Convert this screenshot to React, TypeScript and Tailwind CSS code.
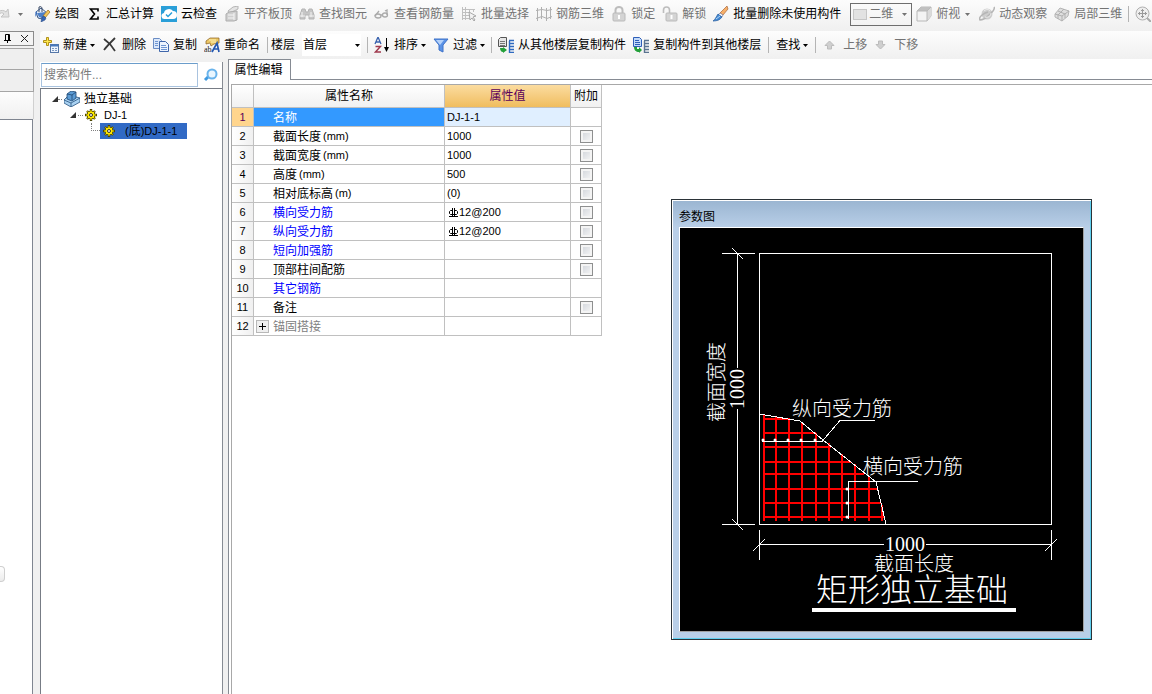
import { useState } from 'react';
import type { ReactNode } from 'react';

function Svg({ children }: { children: ReactNode }) {
  return (
    <svg viewBox="0 0 16 16" className="h-4 w-4 shrink-0" fill="none" aria-hidden="true">
      {children}
    </svg>
  );
}

const icons = {
  redo: (
    <Svg>
      <path d="M3 13c-3-7 5-11 9-7l2-3 1 8H7l3-3C7 5 4 8 5 13z" fill="#e2e2e2" stroke="#c4c4c4" />
    </Svg>
  ),
  draw: (
    <Svg>
      <path d="M1 6l5-4 6 5-5 6-4-1z" fill="#eaf1fb" stroke="#3d5a85" />
      <path d="M2 7l9-1-4 6-3-1z" fill="#4d80c8" />
      <path d="M4 6V1c2-1 3 0 3 2v3" stroke="#3a4a66" />
      <path d="M1 5c-1 3-1 5 0 6l1-5z" fill="#3f74c4" />
      <path d="M13 4l2 2-5 6-2-2z" fill="#f3c65a" stroke="#9a6a1a" strokeWidth=".7" />
      <path d="M7 11l2-1 2 2-1 2-4 2z" fill="#3566b4" stroke="#25457c" strokeWidth=".5" />
    </Svg>
  ),
  sum: (
    <Svg>
      <path d="M12 5.500V3H4.500l4 5-4 5H12v-2.500" stroke="#000" strokeWidth="1.6" />
    </Svg>
  ),
  cloud: (
    <Svg>
      <path d="M0 0h16v16H0z" fill="#2a9fd8" />
      <path d="M4 13a3 3 0 01-1-6 5 4.500 0 019-2 4 4 0 010 8z" fill="#fff" />
      <path d="M5 8.500l2 2 4-4" stroke="#2a9fd8" strokeWidth="1.5" />
    </Svg>
  ),
  slab: (
    <Svg>
      <path d="M4 5l5-4 5-1v3l-4 2-5 2z" fill="#e4e4e4" stroke="#b5b5b5" />
      <path d="M2 8l3-2 8-1v9l-3 1H2z" fill="#cfcfcf" stroke="#adadad" />
      <path d="M4 9h6M4 12h6M10 7v7" stroke="#f5f5f5" />
    </Svg>
  ),
  binoculars: (
    <Svg>
      <path d="M3 3h3l1 3h2l1-3h3l2 6v4h-5V9H6v4H1V9z" fill="#c6c6c6" stroke="#b4b4b4" />
      <path d="M3 6v5M12 6v5M1 10h5M10 10h5" stroke="#f3f3f3" />
    </Svg>
  ),
  glasses: (
    <Svg>
      <ellipse cx="4" cy="10" rx="3" ry="2" stroke="#aaa" strokeWidth="1.3" />
      <ellipse cx="11" cy="9" rx="2.500" ry="2" stroke="#aaa" strokeWidth="1.3" />
      <path d="M7 9h2M1 10l4-5M13 9V4l-2 1" stroke="#aaa" strokeWidth="1.3" />
    </Svg>
  ),
  batch: (
    <Svg>
      <path d="M1.500 1v13M4.500 1v13M1 3.500h13M1 6.500h8M1 9.500h8M1 12.500h8M8.500 3v4M12.500 3v3" stroke="#c0c0c0" />
      <path d="M8 6l7 4-3 1 2 3-1 1-2-3-2 2z" fill="#f2f2f2" stroke="#a8a8a8" />
    </Svg>
  ),
  rebar3d: (
    <Svg>
      <path d="M1.500 2v13M5.500 1v12M10.500 2v13M14.500 1v12M0 4.500l6-1 5 1 5-1M0 12.500l6-2 5 2 5-2" stroke="#b0b0b0" />
    </Svg>
  ),
  lock: (
    <Svg>
      <path d="M4.500 7V4a3.500 3 0 017 0v3" stroke="#bdbdbd" strokeWidth="2" />
      <rect x="2" y="7" width="12" height="8" rx="1" fill="#d4d4d4" stroke="#bababa" />
      <path d="M8 9v4" stroke="#fff" strokeWidth="2" />
    </Svg>
  ),
  unlock: (
    <Svg>
      <path d="M1.500 7V4a3 3 0 016 0v3" stroke="#bdbdbd" strokeWidth="1.6" />
      <rect x="4" y="7" width="11" height="8" rx="1" fill="#d4d4d4" stroke="#bababa" />
      <path d="M9.500 9v4" stroke="#fff" strokeWidth="2" />
    </Svg>
  ),
  brush: (
    <Svg>
      <path d="M14 0l1 3-5 6-3-2z" fill="#f7b06a" stroke="#a8663a" strokeWidth=".7" />
      <path d="M7 7l3 2-1 2-4-2z" fill="#fff" stroke="#7a7a9a" strokeWidth=".7" />
      <path d="M5 8l4 3c-2 3-5 4-9 4 2-1 3-4 5-7z" fill="#4289d4" stroke="#245a9c" strokeWidth=".7" />
      <path d="M3 13l4-3" stroke="#b7d6f5" />
    </Svg>
  ),
  plane: (
    <Svg>
      <rect x="1.500" y="3.500" width="13" height="10" fill="#e2e2e2" stroke="#c6c6c6" />
    </Svg>
  ),
  cube: (
    <Svg>
      <path d="M1 5l4-4h10v9l-4 5H1z" fill="#f3f3f3" stroke="#b8b8b8" />
      <path d="M1 5l4-4h10l-4 4z" fill="#c0c0c0" />
      <path d="M11 5l4-4v9l-4 5z" fill="#dadada" />
      <path d="M1 5h10v10M11 5l4-4" stroke="#b8b8b8" />
    </Svg>
  ),
  orbit: (
    <Svg>
      <circle cx="8" cy="8" r="5.500" fill="#cdcdcd" />
      <path d="M15 1c2 3-9 13-14 13-2-3 4-7 8-8" stroke="#b5b5b5" strokeWidth="1.5" />
      <path d="M5 5c2-2 5-2 6 0M6 11c3 1 6-1 6-4" stroke="#efefef" />
    </Svg>
  ),
  local3d: (
    <Svg>
      <path d="M1 8l5-6 9 3-1 5-6 5-7-4z" fill="#dedede" stroke="#b5b5b5" />
      <path d="M1 8l7 2 7-5M8 10v5M4 5l7 3v4M10 3L4 9v4" stroke="#b0b0b0" />
    </Svg>
  ),
  zoom: (
    <Svg>
      <circle cx="7.500" cy="7.500" r="6.500" fill="#eee" stroke="#b0b0b0" />
      <path d="M7.500 3v9M3 7.500h9M6 4.500h3M6 10.500h3M4.500 6v3M10.500 6v3" stroke="#999" />
      <path d="M12 12l4 4" stroke="#aaa" strokeWidth="2" />
    </Svg>
  ),
  create: (
    <Svg>
      <rect x="7.500" y="7.500" width="8" height="8" fill="#eef5fe" stroke="#5577a8" />
      <path d="M8 8.500h7" stroke="#4779be" strokeWidth="2" />
      <path d="M9 11.500h2M12 11.500h2M9 13.500h2M12 13.500h2" stroke="#7c98c0" />
      <path d="M3.500.500h2v3h3v2h-3v3h-2v-3h-3v-2h3z" fill="#ffe94d" stroke="#a8860c" strokeWidth=".9" />
    </Svg>
  ),
  remove: (
    <Svg>
      <path d="M2 2l6 5 5 7M13 1C9 5 5 9 2 13" stroke="#3a3a3a" strokeWidth="1.8" />
    </Svg>
  ),
  copy: (
    <Svg>
      <path d="M.5 1.500h6l2 2v8h-8z" fill="#dbe8fa" stroke="#6a8cc4" />
      <path d="M6.500 4.500h6l3 3v7h-9z" fill="#edf4fe" stroke="#3f66aa" />
      <path d="M2 4.500h3M2 6.500h3M2 8.500h3M8 8.500h5M8 10.500h6M8 12.500h6" stroke="#6f96d2" />
    </Svg>
  ),
  rename: (
    <Svg>
      <path d="M2 4l4-3h9v5l-5 1-3 2-1-3-4 1z" fill="#ecc766" stroke="#8a5f1c" strokeWidth=".7" />
      <path d="M5 3h7M7 5h5" stroke="#fff2b5" />
      <text x="0" y="15" fontSize="8" fill="#222" fontFamily="Liberation Serif, serif">ab</text>
      <path d="M8 15l5-9 2 9M10 12h5" stroke="#2557b0" strokeWidth="1.7" />
    </Svg>
  ),
  sort: (
    <Svg>
      <path d="M1 7l3-7 3 7M2 5h4" stroke="#3a63ae" strokeWidth="1.3" />
      <path d="M1.500 9.500h5l-5 5.500h5.500" stroke="#a03a4e" strokeWidth="1.4" />
      <path d="M12.500 1v11" stroke="#000" />
      <path d="M10 10h5l-2.500 5z" fill="#000" />
    </Svg>
  ),
  filter: (
    <Svg>
      <path d="M1 2h14l-5 6v7l-4-2V8z" fill="#5b93e6" stroke="#3f72c8" />
      <path d="M3 3h8L7 8z" fill="#b5d2fa" />
    </Svg>
  ),
  copyFrom: (
    <Svg>
      <path d="M.5 2.500l2-2h6v9h-8z" fill="#e6e6e6" stroke="#555" />
      <path d="M2 4.500h5M2 6.500h5M2 8.500h5" stroke="#777" />
      <path d="M2 11h3v-1l4 3-4 3v-1c-2 0-3-2-3-4z" fill="#23a03a" />
      <path d="M11.500 4v12M11 3.500h5M11 6.500h5M11 9.500h5M11 12.500h5M11 15.500h5" stroke="#2e6ac0" strokeWidth="1.4" />
    </Svg>
  ),
  copyTo: (
    <Svg>
      <path d="M.5.500h6l2 2v7h-8z" fill="#c4daf9" stroke="#2e5fb8" />
      <path d="M2 3.500h4M2 5.500h5M2 7.500h5" stroke="#2e5fb8" />
      <path d="M1 10h3v2h2v-2l3 3-3 3v-1c-3 0-5-2-5-5z" fill="#23a03a" />
      <path d="M11.500 4v12M11 3.500h5M11 6.500h5M11 9.500h5M11 12.500h5M11 15.500h5" stroke="#5a7390" strokeWidth="1.4" />
    </Svg>
  ),
  up: (
    <Svg>
      <path d="M6.500 4l4.500 4.500H8.500V12h-4V8.500H2z" fill="#cfcfcf" stroke="#bcbcbc" />
    </Svg>
  ),
  down: (
    <Svg>
      <path d="M6.500 12L2 7.500h2.500V4h4v3.500H11z" fill="#cfcfcf" stroke="#bcbcbc" />
    </Svg>
  ),
  search: (
    <Svg>
      <path d="M6 9l-4 4" stroke="#3f9ae0" strokeWidth="3" />
      <circle cx="9" cy="7" r="4.500" fill="#e9f6ff" stroke="#6ab4ec" strokeWidth="2" />
    </Svg>
  ),
  foundation: (
    <Svg>
      <path d="M0 9l5-5 11 3v4l-9 5-7-4z" fill="#a9d2f2" stroke="#26507c" strokeWidth=".8" />
      <path d="M0 9l7 3 9-5M7 12v4" stroke="#26507c" strokeWidth=".8" />
      <path d="M3 3l4-3 5 1v6l-4 3-5-2z" fill="#5b9bd4" stroke="#1f4872" strokeWidth=".8" />
      <path d="M3 3l5 1 4-3M8 4v5" stroke="#1f4872" strokeWidth=".8" />
    </Svg>
  ),
  gear: (
    <svg viewBox="0 0 12 12" className="h-3 w-3 shrink-0" fill="none" aria-hidden="true">
      <path d="M6 0v12M0 6h12M2 2l8 8M10 2l-8 8" stroke="#4d4500" strokeWidth="2.4" />
      <circle cx="6" cy="6" r="4" fill="#ffe900" stroke="#4d4500" strokeWidth=".8" />
      <path d="M6 1v10M1 6h10M2.500 2.500l7 7M9.500 2.500l-7 7" stroke="#ffe900" />
      <circle cx="6" cy="6" r="1.500" fill="#fff" stroke="#222" strokeWidth=".9" />
    </svg>
  ),
};

type IconName = keyof typeof icons;

function Caret({ className = '' }: { className?: string }) {
  return (
    <svg viewBox="0 0 5 3" className={'h-[3px] w-[5px] shrink-0 pointer-events-none ' + className} aria-hidden="true">
      <path d="M0 0h5L2.500 3z" fill="currentColor" />
    </svg>
  );
}

function Separator({ tight = false }: { tight?: boolean }) {
  return <div className={tight ? '-mx-px h-4 w-px shrink-0 bg-[#b4b4b4]' : 'h-4 w-px shrink-0 bg-[#b4b4b4]'} />;
}

interface ToolProps {
  icon?: IconName;
  label?: string;
  title?: string;
  menu?: boolean;
  disabled?: boolean;
}

function Tool({ icon, label, title, menu, disabled }: ToolProps) {
  return (
    <button
      type="button"
      disabled={disabled}
      aria-label={title}
      className="flex h-5 shrink-0 items-center gap-1 whitespace-nowrap text-black disabled:text-[#737373]"
    >
      {icon && icons[icon]}
      {label && <span>{label}</span>}
      {menu && <Caret className="-ml-px" />}
    </button>
  );
}

const topTools: ToolProps[] = [
  { icon: 'draw', label: '绘图' },
  { icon: 'sum', label: '汇总计算' },
  { icon: 'cloud', label: '云检查' },
  { icon: 'slab', label: '平齐板顶', disabled: true },
  { icon: 'binoculars', label: '查找图元', disabled: true },
  { icon: 'glasses', label: '查看钢筋量', disabled: true },
  { icon: 'batch', label: '批量选择', disabled: true },
  { icon: 'rebar3d', label: '钢筋三维', disabled: true },
  { icon: 'lock', label: '锁定', disabled: true },
  { icon: 'unlock', label: '解锁', disabled: true },
  { icon: 'brush', label: '批量删除未使用构件' },
];

function TopToolbar() {
  return (
    <div className="flex h-[31px] items-center overflow-hidden bg-linear-to-b from-[#fcfcfc] to-[#f0f0f0] pb-[3px]">
      <div className="flex w-[35px] shrink-0 items-center gap-2 text-[#737373]">
        <button type="button" aria-label="重做" className="-ml-[6px]">
          {icons.redo}
        </button>
        <Caret />
      </div>
      <div className="flex shrink-0 items-center gap-[7px]">
        {topTools.map((t) => (
          <Tool key={t.label} {...t} />
        ))}
      </div>
      <div className="ml-[9px] flex h-[23px] w-[62px] shrink-0 items-center gap-px border border-[#6e6e6e] pl-px pr-1 text-[#737373]">
        {icons.plane}
        <select aria-label="视图模式" className="min-w-0 flex-1 appearance-none bg-transparent">
          <option>二维</option>
        </select>
        <Caret />
      </div>
      <div className="ml-1 flex shrink-0 items-center gap-[7px]">
        <div className="flex items-center gap-[5px] pr-[2px] text-[#737373]">
          <Tool icon="cube" label="俯视" disabled />
          <Caret />
        </div>
        <Tool icon="orbit" label="动态观察" disabled />
        <Tool icon="local3d" label="局部三维" disabled />
        <Separator tight />
        <Tool icon="zoom" title="缩放" disabled />
      </div>
    </div>
  );
}

function ComponentToolbar() {
  return (
    <div className="flex h-[28px] shrink-0 items-center gap-[7px] overflow-hidden rounded-tl bg-linear-to-b from-[#fdfdfd] to-[#f0f0f0] pl-[3px]">
      <Tool icon="create" label="新建" menu />
      <Tool icon="remove" label="删除" />
      <Tool icon="copy" label="复制" />
      <Tool icon="rename" label="重命名" />
      <div className="flex shrink-0 items-center gap-[3px]">
        <Separator />
        <label htmlFor="floor">楼层</label>
      </div>
      <div className="flex h-[22px] w-[59px] shrink-0 items-center bg-white pl-px pr-px">
        <select id="floor" className="min-w-0 flex-1 appearance-none bg-transparent">
          <option>首层</option>
        </select>
        <Caret />
      </div>
      <Separator tight />
      <Tool icon="sort" label="排序" menu />
      <Tool icon="filter" label="过滤" menu />
      <Separator tight />
      <Tool icon="copyFrom" label="从其他楼层复制构件" />
      <Tool icon="copyTo" label="复制构件到其他楼层" />
      <Separator />
      <Tool label="查找" menu />
      <Separator />
      <Tool icon="up" label="上移" disabled />
      <Tool icon="down" label="下移" disabled />
    </div>
  );
}

function LeftDock() {
  return (
    <aside className="flex w-[34px] shrink-0 flex-col">
      <div className="flex h-[15px] items-center justify-end gap-2 border border-l-0 border-[#8b8b8b] bg-[#f4f4f4] pr-1">
        <button type="button" aria-label="固定">
          <svg viewBox="0 0 9 9" className="h-[9px] w-[9px]" fill="none" stroke="#000">
            <path d="M2.500 6V.500h4V6M1 6.500h7M4.500 7v2M5.500 1v5" />
          </svg>
        </button>
        <button type="button" aria-label="关闭">
          <svg viewBox="0 0 9 9" className="h-[9px] w-[9px]" fill="none" stroke="#222">
            <path d="M1 1l7 7M8 1L1 8" />
          </svg>
        </button>
      </div>
      <div className="mt-[2px] h-[22px] border-y border-r border-[#a5a5a5] bg-[#efefef]" />
      <div className="h-[22px] border-b border-r border-[#a5a5a5] bg-[#efefef]" />
      <div className="h-[27px] border-r border-[#d0d0d0] bg-linear-to-b from-[#fdfdfd] to-[#f0f0f0]" />
      <div className="mr-px flex flex-1 flex-col border-r border-t border-[#7f8590] bg-white">
        <div className="flex-[4]" />
        <button
          type="button"
          aria-label="滚动"
          className="h-4 w-[5px] rounded-r-sm border border-l-0 border-[#cfcfcf] bg-linear-to-b from-white to-[#ececec]"
        />
        <div className="flex-1" />
      </div>
    </aside>
  );
}

function Expander() {
  return (
    <svg viewBox="0 0 6 6" className="h-[6px] w-[6px] shrink-0" aria-hidden="true">
      <path d="M6 0v6H0z" fill="#333" />
    </svg>
  );
}

function ComponentTree() {
  return (
    <section className="mt-[3px] flex w-[183px] shrink-0 flex-col border-r border-[#868b93] bg-white">
      <div className="flex h-[26px] items-center gap-[5px] pl-px">
        <input
          type="text"
          aria-label="搜索构件"
          placeholder="搜索构件..."
          className="h-6 w-[157px] border border-[#a9c3df] border-t-[#6b9dcb] px-[2px] outline-none placeholder:text-[#7b7b7b]"
        />
        <button type="button" aria-label="搜索">
          {icons.search}
        </button>
      </div>
      <ul className="flex-1 border-l border-t border-[#777c85] pt-[2px] leading-4">
        <li>
          <div className="flex h-4 items-center pl-[11px]">
            <Expander />
            <span className="w-1 border-t border-dotted border-[#808080]" />
            <span className="mr-1 ml-[2px]">{icons.foundation}</span>
            独立基础
          </div>
          <ul>
            <li>
              <div className="flex h-4 items-center pl-[29px]">
                <Expander />
                <span className="mx-[2px] w-[5px] border-t border-dotted border-[#808080]" />
                {icons.gear}
                <span className="ml-[7px] text-[11px]">DJ-1</span>
              </div>
              <ul>
                <li className="flex h-4 pl-[50px]">
                  <span className="h-2 w-[9px] border-b border-l border-dotted border-[#808080]" />
                  <span className="flex w-[87px] items-center bg-[#316ac5] pl-[3px]">
                    {icons.gear}
                    <span className="ml-[10px] text-[11px]">
                      (<span className="text-xs">底</span>)DJ-1-1
                    </span>
                  </span>
                </li>
              </ul>
            </li>
          </ul>
        </li>
      </ul>
    </section>
  );
}

interface Property {
  name: string;
  unit?: string;
  value?: string;
  rebar?: boolean;
  extra?: boolean;
  tone?: 'blue' | 'gray';
  group?: boolean;
}

const properties: Property[] = [
  { name: '名称', value: 'DJ-1-1' },
  { name: '截面长度', unit: '(mm)', value: '1000', extra: true },
  { name: '截面宽度', unit: '(mm)', value: '1000', extra: true },
  { name: '高度', unit: '(mm)', value: '500', extra: true },
  { name: '相对底标高', unit: '(m)', value: '(0)', extra: true },
  { name: '横向受力筋', value: '12@200', rebar: true, extra: true, tone: 'blue' },
  { name: '纵向受力筋', value: '12@200', rebar: true, extra: true, tone: 'blue' },
  { name: '短向加强筋', extra: true, tone: 'blue' },
  { name: '顶部柱间配筋', extra: true },
  { name: '其它钢筋', tone: 'blue' },
  { name: '备注', extra: true },
  { name: '锚固搭接', tone: 'gray', group: true },
];

function RebarMark() {
  return (
    <svg viewBox="0 0 9 9" className="ml-[2px] h-[9px] w-[9px] shrink-0" fill="none" stroke="#000" aria-label="三级钢">
      <path d="M3.500 0v9M5.500 0v9M0 8.500h9M3 2.500H1.500l-1 1v2l1 1H7.500l1-1v-2l-1-1H6" />
    </svg>
  );
}

function PropertyRow({ item, index }: { item: Property; index: number }) {
  const [checked, setChecked] = useState(false);
  const selected = index === 0;

  let nameColor = 'text-black';
  if (selected) nameColor = 'bg-[#3399ff] text-white';
  else if (item.tone === 'blue') nameColor = 'text-[#0000ff]';
  else if (item.tone === 'gray') nameColor = 'text-[#808080]';

  return (
    <tr className="h-[19px]">
      <th
        scope="row"
        className={
          'border-b border-r border-[#c0c0c0] text-center text-[11px] font-normal ' +
          (selected ? 'bg-[#ffd58d] text-[#5a005a]' : 'bg-linear-to-r from-white to-[#f0f0f0]')
        }
      >
        {index + 1}
      </th>
      <td className={'border-b border-r border-[#c0c0c0] ' + nameColor}>
        <div className="flex h-[18px] items-center pt-px">
          <span className="flex w-[19px] pl-[2px]">
            {item.group && (
              <button
                type="button"
                aria-label="展开"
                className="flex h-[13px] w-[13px] items-center justify-center border border-[#b8b8b8] bg-[#efefef]"
              >
                <svg viewBox="0 0 7 7" className="h-[7px] w-[7px]" stroke="#000">
                  <path d="M0 3.500h7M3.500 0v7" />
                </svg>
              </button>
            )}
          </span>
          {item.name}
          {item.unit && <span className="ml-[2px] text-[11px]">{item.unit}</span>}
        </div>
      </td>
      <td className={'border-b border-r border-[#c0c0c0] ' + (selected ? 'bg-[#e0efff]' : '')}>
        <div className="flex h-[18px] items-center gap-px pl-[2px] text-[11px]">
          {item.rebar && <RebarMark />}
          {item.value}
        </div>
      </td>
      <td className="border-b border-r border-[#c0c0c0]">
        {item.extra && (
          <input
            type="checkbox"
            aria-label={'附加 ' + item.name}
            checked={checked}
            onChange={(e) => setChecked(e.target.checked)}
            className="mx-auto block h-[13px] w-[13px] appearance-none border border-[#8e8f8f] bg-linear-to-br from-[#cfd3d9] to-[#f8f8f8] shadow-[inset_0_0_0_2px_#f4f4f4] checked:to-[#3399ff]"
          />
        )}
      </td>
    </tr>
  );
}

function PropertyTable() {
  return (
    <table className="w-[370px] table-fixed border-separate border-spacing-0">
      <colgroup>
        <col className="w-[22px]" />
        <col className="w-[191px]" />
        <col className="w-[126px]" />
        <col className="w-[31px]" />
      </colgroup>
      <thead>
        <tr className="h-[23px] bg-linear-to-b from-white to-[#f0f0f0]">
          <th aria-label="序号" className="border-b border-r border-[#c0c0c0]" />
          <th className="border-b border-r border-[#c0c0c0] font-normal">属性名称</th>
          <th className="border-b border-r border-[#c0c0c0] bg-linear-to-b from-[#fbdc9f] to-[#f0bd5d] font-normal text-[#5a005a]">
            属性值
          </th>
          <th className="border-b border-r border-[#c0c0c0] font-normal">附加</th>
        </tr>
      </thead>
      <tbody>
        {properties.map((p, i) => (
          <PropertyRow key={p.name} item={p} index={i} />
        ))}
      </tbody>
    </table>
  );
}

// x, top of every vertical bar
const verticalBars = [
  [84, 187], [96, 189], [109, 190], [122, 194], [136, 205],
  [149, 215], [162, 226], [175, 236], [189, 248], [202, 277],
];

// y, right end of every horizontal bar
const horizontalBars = [
  [191, 109], [205, 136], [219, 151], [234, 171],
  [246, 184], [261, 197], [275, 201], [289, 204],
];

function FoundationDrawing() {
  return (
    <svg viewBox="0 0 403 403" className="block w-full bg-black" fill="none" role="img" aria-label="矩形独立基础">
      <g stroke="#f00" strokeWidth="2" shapeRendering="crispEdges">
        {verticalBars.map(([x, y]) => (
          <path key={x} d={`M${x} ${y}V293`} />
        ))}
        {horizontalBars.map(([y, x]) => (
          <path key={y} d={`M83 ${y}H${x}`} />
        ))}
      </g>
      <g stroke="#fff" shapeRendering="crispEdges">
        <rect x="79.500" y="25.500" width="292" height="271" />
        <path d="M79 186L120 193L143 212L196 254L206 296" />
        {/* width dimension */}
        <path d="M42 25.500H75M42 296.500H75M57.500 25V140M57.500 181V297M52 20L63 31M52 291L63 302" />
        {/* length dimension */}
        <path d="M79.500 302V332M371.500 302V332M79 316.500H204M246 316.500H372M73 323L85 311M365 323L377 311" />
        {/* leaders */}
        <path d="M82 213.500H142L160 192.500H195M168.500 291V253.500H238" />
      </g>
      <g fill="#fff">
        {[83, 95, 108, 121, 135].map((x) => (
          <circle key={x} cx={x} cy="212" r="1.500" />
        ))}
        {[261, 275, 289].map((y) => (
          <circle key={y} cx="167" cy={y} r="1.500" />
        ))}
        <path d="M132 380h204v4H132z" />
      </g>
      <g fill="#fff" fontSize="20" className="font-['Liberation_Serif','Noto_Sans_CJK_SC',serif] font-light">
        <text x="112" y="188">纵向受力筋</text>
        <text x="183" y="246">横向受力筋</text>
        <text x="225" y="323" textAnchor="middle">1000</text>
        <text x="194" y="343">截面长度</text>
        <text x="136" y="373" fontSize="32">矩形独立基础</text>
        <text transform="translate(44 194) rotate(-90)">截面宽度</text>
        <text transform="translate(64 161) rotate(-90)" textAnchor="middle">1000</text>
      </g>
    </svg>
  );
}

function ParameterWindow() {
  return (
    <div className="absolute left-[442px] top-[119px] w-[421px] border border-[#2b3338] bg-[#b9cfe8] bg-linear-to-b from-[#9ab5d1] to-[#b9cfe8] to-[28px] shadow-[inset_1px_1px_0_#fff,inset_-1px_-1px_0_#5fd0f0]">
      <h2 className="flex h-[27px] items-center px-[7px] pt-[6px]">参数图</h2>
      <div className="mx-[7px] mb-[7px] border border-b-[#a0a0a0] border-l-white border-r-[#a0a0a0] border-t-white">
        <FoundationDrawing />
      </div>
    </div>
  );
}

function PropertyEditor() {
  return (
    <main className="flex min-w-0 flex-1 flex-col">
      <div className="flex h-[21px] bg-white" role="tablist">
        <button
          type="button"
          role="tab"
          aria-selected="true"
          className="w-[63px] border-l border-r border-t border-[#868b93] pr-[2px] text-center"
        >
          属性编辑
        </button>
        <div className="flex-1 border-b border-[#868b93]" />
      </div>
      <div className="relative flex flex-1 flex-col border-l border-[#868b93] bg-white pl-[2px] pt-1">
        <div className="flex-1 border-l border-t border-[#a8a8a8]">
          <PropertyTable />
        </div>
        <ParameterWindow />
      </div>
    </main>
  );
}

export default function App() {
  return (
    <div className="flex min-h-screen flex-col overflow-hidden bg-[#f0f0f0] font-['Liberation_Sans','Noto_Sans_CJK_SC',sans-serif] text-xs text-black">
      <TopToolbar />
      <div className="flex flex-1">
        <LeftDock />
        <div className="ml-[6px] flex min-w-0 flex-1 flex-col">
          <ComponentToolbar />
          <div className="flex flex-1 gap-[5px]">
            <ComponentTree />
            <PropertyEditor />
          </div>
        </div>
      </div>
    </div>
  );
}
